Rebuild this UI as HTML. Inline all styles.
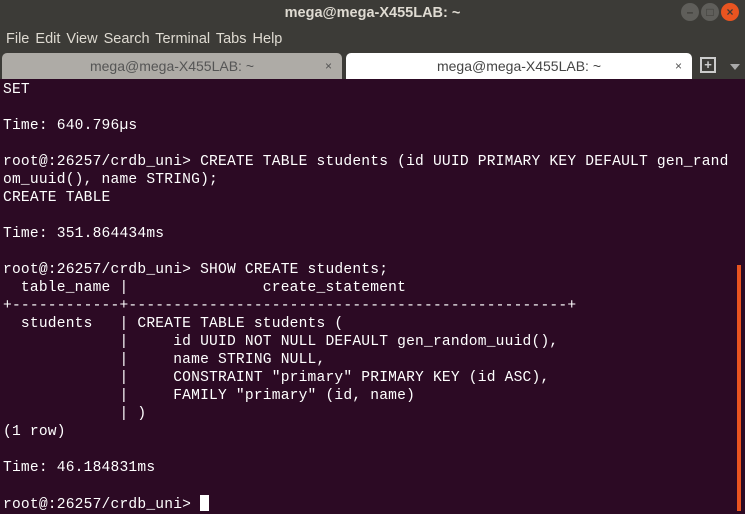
<!DOCTYPE html><html><head><style>
body{margin:0;width:745px;height:511px;overflow:hidden;background:#2c0a24;font-family:"Liberation Sans",sans-serif;position:relative}
.top{position:absolute;left:0;top:0;width:745px;height:79px;background:#3c3b37}
.title{position:absolute;top:5px;width:745px;text-align:center;color:#dfdbd2;font-weight:bold;font-size:14.5px}
.btn{position:absolute;top:3px;width:18px;height:18px;border-radius:50%;background:#5f5e5a;color:#3c3b37;font-size:12px;text-align:center;line-height:18px;font-weight:bold}
.menu{position:absolute;top:31px;left:6px;color:#dfdbd2;font-size:14.5px;word-spacing:2px}
.tab{position:absolute;top:53px;height:26px;border-radius:5px 5px 0 0;font-size:14px;text-align:center;line-height:26px}
.x{position:absolute;right:10px;top:0;font-size:12px;color:#555}
pre{position:absolute;left:3px;top:81px;margin:0;font-family:"Liberation Mono",monospace;font-size:14.6px;line-height:18px;color:#fff;letter-spacing:0.2px}
.sb{position:absolute;left:737px;top:265px;width:4px;height:246px;background:#e95420}
.cur{display:inline-block;width:9px;height:16px;background:#fff;vertical-align:-3px}
</style></head><body>
<div class="top">
<div class="title">mega@mega-X455LAB: ~</div>
<div class="btn" style="left:681px">–</div>
<div class="btn" style="left:701px">□</div>
<div class="btn" style="left:721px;background:#e95420;color:#3c3b37">×</div>
<div class="menu">File Edit View Search Terminal Tabs Help</div>
<div class="tab" style="left:2px;width:340px;background:#aeaba6;color:#555">mega@mega-X455LAB: ~<span class="x">×</span></div>
<div class="tab" style="left:346px;width:346px;background:#fff;color:#444">mega@mega-X455LAB: ~<span class="x">×</span></div>
<div style="position:absolute;left:700px;top:57px;width:12px;height:12px;border:2px solid #ccc;color:#ccc;font-size:13px;line-height:12px;text-align:center;font-weight:bold">+</div>
<div style="position:absolute;left:730px;top:64px;border:5px solid transparent;border-top:6px solid #aaa"></div>
</div>
<pre>SET

Time: 640.796µs

root@:26257/crdb_uni> CREATE TABLE students (id UUID PRIMARY KEY DEFAULT gen_rand
om_uuid(), name STRING);
CREATE TABLE

Time: 351.864434ms

root@:26257/crdb_uni> SHOW CREATE students;
  table_name |               create_statement
+------------+-------------------------------------------------+
  students   | CREATE TABLE students (
             |     id UUID NOT NULL DEFAULT gen_random_uuid(),
             |     name STRING NULL,
             |     CONSTRAINT "primary" PRIMARY KEY (id ASC),
             |     FAMILY "primary" (id, name)
             | )
(1 row)

Time: 46.184831ms

root@:26257/crdb_uni> <span class="cur"></span></pre>
<div class="sb"></div>
</body></html>
